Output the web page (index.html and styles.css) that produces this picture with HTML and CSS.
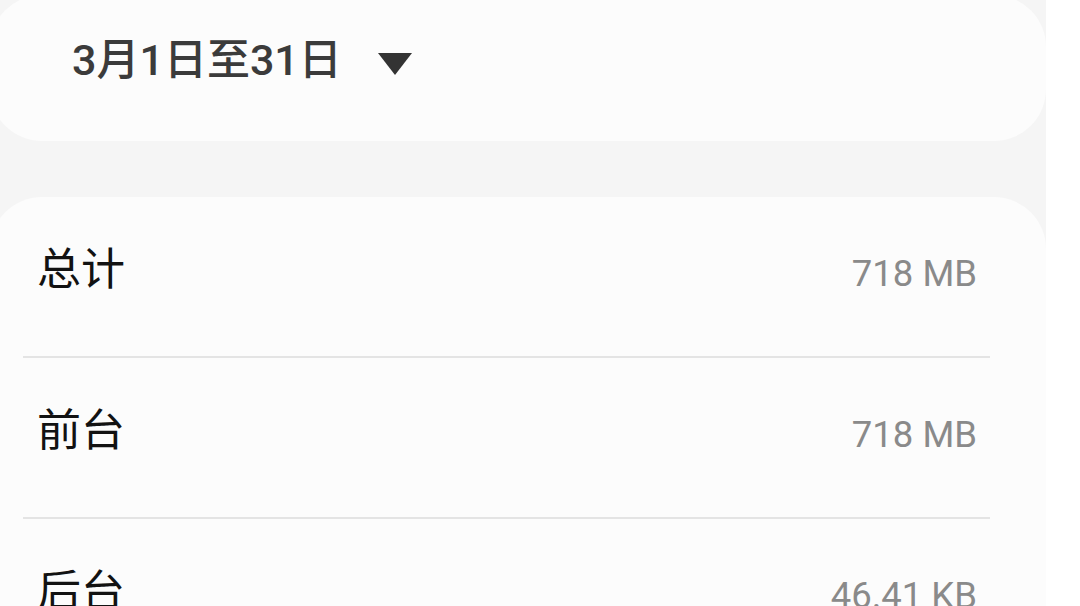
FILE: index.html
```html
<!DOCTYPE html>
<html lang="zh-CN">
<head>
<meta charset="utf-8">
<title>数据使用</title>
<link rel="stylesheet" href="styles.css">
</head>
<body>
<div class="screen">
  <main class="main">
    <section class="card period">
      <button class="period-btn">
        <span class="period-text">3月1日至31日</span>
        <svg class="caret" width="36" height="24" viewBox="0 0 36 24" aria-hidden="true"><path d="M1 1 H35 L18 23 Z" fill="#333333"/></svg>
      </button>
    </section>
    <section class="card usage">
      <div class="list">
        <div class="row"><span class="label">总计</span><span class="value">718 MB</span></div>
        <div class="row"><span class="label">前台</span><span class="value">718 MB</span></div>
        <div class="row"><span class="label">后台</span><span class="value">46.41 KB</span></div>
      </div>
    </section>
  </main>
  <div class="edge"></div>
</div>
</body>
</html>
```

FILE: styles.css
```css
html, body {
  margin: 0;
  padding: 0;
  height: 100%;
  background: #ffffff;
}
body {
  font-family: "Roboto", "Noto Sans CJK SC", sans-serif;
  overflow: hidden;
}
.screen {
  display: flex;
  height: 606px;
  overflow: hidden;
}
.main {
  width: 1046px;
  flex: none;
  background: #f5f5f5;
  overflow: hidden;
}
.edge {
  flex: 1;
  background: #ffffff;
}
.card {
  background: #fcfcfc;
  border-radius: 52px;
  margin-left: -10px;
}
.period {
  margin-top: -5px;
  height: 146px;
  display: flex;
  align-items: center;
  padding-left: 82px;
}
.period-btn {
  display: flex;
  align-items: center;
  gap: 35px;
  border: 0;
  background: none;
  padding: 0;
  margin-top: -24px;
  font: inherit;
}
.period-text {
  font-family: "Roboto", "Noto Sans CJK SC", sans-serif;
  font-weight: 500;
  font-size: 43px;
  color: #3b3b3b;
}
.caret {
  display: block;
  margin-top: 16px;
}
.usage {
  margin-top: 56px;
  padding: 0 56px 0 33px;
}
.row {
  height: 161px;
  display: flex;
  align-items: center;
  justify-content: space-between;
  padding: 0 13px 21px 14px;
  box-sizing: border-box;
  border-bottom: 2px solid #e4e4e4;
}
.label {
  font-family: "Noto Sans CJK SC", sans-serif;
  font-size: 44px;
  color: #121212;
}
.value {
  font-family: "Roboto", sans-serif;
  font-size: 36.5px;
  color: #8a8a8a;
  margin-top: 15px;
}
```
